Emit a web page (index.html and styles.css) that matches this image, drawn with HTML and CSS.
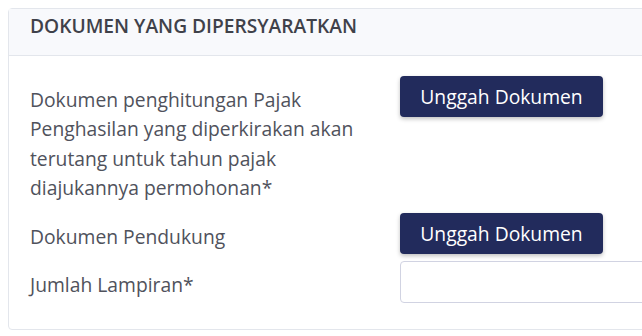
FILE: index.html
```html
<!DOCTYPE html>
<html lang="id">
<head>
    <meta charset="UTF-8">
    <meta name="viewport" content="width=device-width, initial-scale=1.0">
    <title>Dokumen yang Dipersyaratkan</title>
    <link rel="stylesheet" href="styles.css">
</head>
<body>
    <div class="card">
        <div class="card-header">DOKUMEN YANG DIPERSYARATKAN</div>
        <div class="card-body">
            <div class="form-row">
                <label class="form-label">Dokumen penghitungan Pajak Penghasilan yang diperkirakan akan terutang untuk tahun pajak diajukannya permohonan*</label>
                <div class="form-field">
                    <button class="upload-button">Unggah Dokumen</button>
                </div>
            </div>
            <div class="form-row">
                <label class="form-label">Dokumen Pendukung</label>
                <div class="form-field">
                    <button class="upload-button">Unggah Dokumen</button>
                </div>
            </div>
            <div class="form-row">
                <label class="form-label" for="jumlahLampiran">Jumlah Lampiran*</label>
                <div class="form-field">
                    <input type="text" id="jumlahLampiran" class="form-input">
                </div>
            </div>
        </div>
    </div>
</body>
</html>
```

FILE: styles.css
```css
body {
    margin: 8px 0 0 8px;
    font-family: 'Open Sans', 'Noto Sans', sans-serif;
    color: #50525c;
    background: #fff;
    overflow: hidden;
}

.card {
    width: 760px;
    border: 1px solid #e3e6ec;
    border-radius: 4px;
    background: #fff;
}

.card-header {
    box-sizing: border-box;
    background: #f8f9fc;
    border-bottom: 1px solid #e3e6ec;
    padding: 5px 21px 0;
    height: 47px;
    line-height: 23px;
    font-size: 19.2px;
    font-weight: 600;
    color: #3f414a;
}

.card-body {
    padding: 20px 21px 20px;
}

.form-row {
    display: flex;
    align-items: flex-start;
    margin-bottom: 1.5px;
}

.form-row:last-child {
    margin-bottom: 0;
}

.form-label {
    box-sizing: border-box;
    width: 370px;
    font-size: 19.3px;
    line-height: 29.3px;
    padding: 9px 20px 9px 0;
}

.form-field {
    flex: 1;
}

.upload-button {
    display: block;
    width: 203px;
    height: 41px;
    padding: 0;
    background: #222b5c;
    color: #fff;
    border: none;
    border-radius: 4px;
    font-family: 'Open Sans', 'Noto Sans', sans-serif;
    font-size: 19.3px;
    box-shadow: 0 2px 4px rgba(0, 0, 0, 0.25);
    cursor: pointer;
}

.form-input {
    display: block;
    width: 320px;
    height: 42px;
    box-sizing: border-box;
    border: 1px solid #d1d3e2;
    border-radius: 4px;
    font-size: 19px;
}
```
